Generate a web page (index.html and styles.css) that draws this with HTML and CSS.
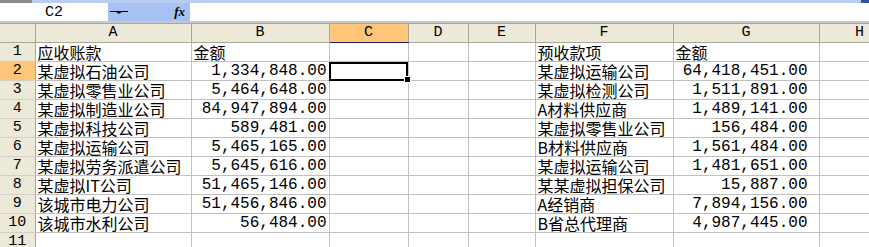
FILE: index.html
```html
<!DOCTYPE html>
<html lang="zh-CN">
<head>
    <meta charset="UTF-8">
    <title>Sheet1</title>
    <link rel="stylesheet" href="styles.css">
</head>
<body>
    <div class="strip"><span class="strip-grey"></span><span class="strip-end"></span></div>

    <div class="formula-bar">
        <div class="name-box">C2</div>
        <div class="fx-zone">
            <svg class="drop" width="18" height="6" viewBox="0 0 18 6">
                <path d="M0 2.5h18" stroke="#000" stroke-width="1"/>
                <path d="M5 2h8l-4 3z" fill="#000"/>
            </svg>
            <span class="fx">fx</span>
        </div>
        <div class="formula-input"></div>
    </div>

    <table class="sheet">
        <colgroup>
            <col class="c-hdr">
            <col class="c-a"><col class="c-b"><col class="c-c"><col class="c-d">
            <col class="c-e"><col class="c-f"><col class="c-g"><col class="c-h">
        </colgroup>
        <tr class="col-heads">
            <th></th><th>A</th><th>B</th><th class="sel">C</th><th>D</th><th>E</th><th>F</th><th>G</th><th>H</th>
        </tr>
        <tr>
            <th>1</th><td>应收账款</td><td>金额</td><td></td><td></td><td></td><td>预收款项</td><td>金额</td><td></td>
        </tr>
        <tr>
            <th class="sel">2</th><td>某虚拟石油公司</td><td class="num">1,334,848.00</td><td class="active"><span class="handle"></span></td><td></td><td></td><td>某虚拟运输公司</td><td class="num pad">64,418,451.00</td><td></td>
        </tr>
        <tr>
            <th>3</th><td>某虚拟零售业公司</td><td class="num">5,464,648.00</td><td></td><td></td><td></td><td>某虚拟检测公司</td><td class="num pad">1,511,891.00</td><td></td>
        </tr>
        <tr>
            <th>4</th><td>某虚拟制造业公司</td><td class="num">84,947,894.00</td><td></td><td></td><td></td><td>A材料供应商</td><td class="num pad">1,489,141.00</td><td></td>
        </tr>
        <tr>
            <th>5</th><td>某虚拟科技公司</td><td class="num">589,481.00</td><td></td><td></td><td></td><td>某虚拟零售业公司</td><td class="num pad">156,484.00</td><td></td>
        </tr>
        <tr>
            <th>6</th><td>某虚拟运输公司</td><td class="num">5,465,165.00</td><td></td><td></td><td></td><td>B材料供应商</td><td class="num pad">1,561,484.00</td><td></td>
        </tr>
        <tr>
            <th>7</th><td>某虚拟劳务派遣公司</td><td class="num">5,645,616.00</td><td></td><td></td><td></td><td>某虚拟运输公司</td><td class="num pad">1,481,651.00</td><td></td>
        </tr>
        <tr>
            <th>8</th><td>某虚拟IT公司</td><td class="num">51,465,146.00</td><td></td><td></td><td></td><td>某某虚拟担保公司</td><td class="num pad">15,887.00</td><td></td>
        </tr>
        <tr>
            <th>9</th><td>该城市电力公司</td><td class="num">51,456,846.00</td><td></td><td></td><td></td><td>A经销商</td><td class="num pad">7,894,156.00</td><td></td>
        </tr>
        <tr>
            <th>10</th><td>该城市水利公司</td><td class="num">56,484.00</td><td></td><td></td><td></td><td>B省总代理商</td><td class="num pad">4,987,445.00</td><td></td>
        </tr>
        <tr>
            <th>11</th><td></td><td></td><td></td><td></td><td></td><td></td><td></td><td></td>
        </tr>
    </table>
</body>
</html>
```

FILE: styles.css
```css
body {
    margin: 0;
    width: 869px;
    height: 247px;
    overflow: hidden;
    background: #fff;
    font-family: "Noto Sans CJK SC", sans-serif;
}
.strip {
    display: flex;
    height: 3px;
    background: #b9cdf2;
}
.strip-grey {
    width: 32px;
    background: #8c8c8c;
}
.strip-end {
    margin-left: auto;
    width: 8px;
    background: #31539c;
}
.formula-bar {
    display: flex;
    height: 18px;
    border-bottom: 2px solid #c8c8c8;
}
.name-box {
    width: 108px;
    text-align: center;
    font-family: "Liberation Mono", monospace;
    font-size: 15px;
    line-height: 19px;
    color: #000;
}
.fx-zone {
    width: 82px;
    background: #a7c2f2;
    display: flex;
    align-items: center;
    padding-left: 1px;
    box-sizing: border-box;
}
.drop {
    margin-left: 1px;
}
.fx {
    margin-left: auto;
    margin-right: 5px;
    font-family: "Liberation Serif", serif;
    font-style: italic;
    font-weight: bold;
    font-size: 13px;
}
.formula-input {
    flex: 1;
}
.sheet {
    border-collapse: collapse;
    table-layout: fixed;
    width: 900px;
}
.c-hdr { width: 35px; }
.c-a { width: 156px; }
.c-b { width: 138px; }
.c-c { width: 79px; }
.c-d { width: 60px; }
.c-e { width: 67px; }
.c-f { width: 138px; }
.c-g { width: 146px; }
.c-h { width: 81px; }
.sheet th,
.sheet td {
    height: 18px;
    padding: 0 2px;
    line-height: 18px;
    white-space: nowrap;
    overflow: visible;
    font-size: 16px;
    font-weight: normal;
    color: #000;
}
.sheet td {
    border-right: 1px solid #c0c0c0;
    border-bottom: 1px solid #c0c0c0;
    position: relative;
}
.sheet th {
    background: #ece9d8;
    border-right: 1px solid #aca899;
    border-bottom: 1px solid #d4d0c8;
    font-family: "Liberation Mono", monospace;
    font-size: 15px;
    text-align: center;
}
.col-heads th {
    border-top: 1px solid #aca899;
    border-bottom: 1px solid #aca899;
}
.sheet th.sel {
    background: #ffc67a;
}
.col-heads th.sel {
    border-bottom: 1px solid #2a1f5e;
}
.num {
    text-align: right;
    font-family: "Liberation Mono", monospace;
    font-size: 14px;
}
.num.pad {
    padding-right: 11px;
}
.active {
    outline: 2px solid #000;
    outline-offset: -2px;
}
.handle {
    position: absolute;
    right: -3px;
    bottom: -3px;
    width: 5px;
    height: 5px;
    background: #000;
    border: 1px solid #fff;
}
```
